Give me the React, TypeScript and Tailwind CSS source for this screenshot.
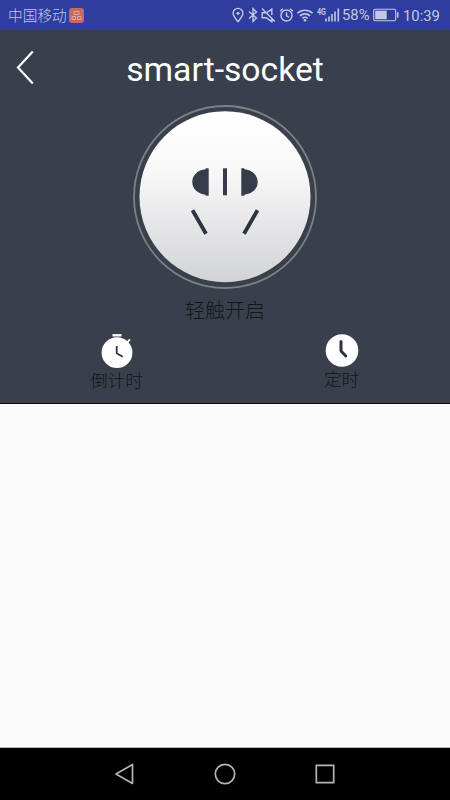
import type { ReactNode } from "react";

const NAV_STROKE = "#b4b4b4";

function StatusIcon({ width, className = "", children }: { width: number; className?: string; children: ReactNode }) {
  return (
    <svg
      width={width}
      height={16}
      viewBox={`0 0 ${width} 16`}
      className={`shrink-0 ${className}`}
      fill="none"
      stroke="currentColor"
      strokeWidth={1.4}
    >
      {children}
    </svg>
  );
}

function StatusBar() {
  return (
    <header className="flex h-[30px] items-center bg-[#2f3e9e] pl-2 pr-[10px] text-[#c3c7e5]">
      <span className="mt-[2px] text-[14.7px] leading-[30px] font-light whitespace-nowrap">中国移动</span>
      <span className="ml-[2px] flex size-[15px] items-center justify-center rounded-[3px] bg-[#c56a5e]">
        <svg width="11" height="11" viewBox="0 0 11 11" fill="none" stroke="#dda9a0" strokeWidth="1">
          <path d="M3 1.5h5v3H3zM1 6.5h3.5v3H1zM6.5 6.5H10v3H6.5z" />
        </svg>
      </span>

      <div className="ml-auto flex items-center">
        <StatusIcon width={12}>
          <path d="M6 14.6C3.4 11.4 1.1 9 1.1 6.3a4.9 4.9 0 0 1 9.8 0C10.9 9 8.6 11.4 6 14.6z" />
          <circle cx="6" cy="6.3" r="1.5" fill="currentColor" stroke="none" />
        </StatusIcon>
        <StatusIcon width={10} className="ml-[4px]">
          <path d="M1 4.5l7.5 6.5L5 14.3V1.7L8.5 5 1 11.5" />
        </StatusIcon>
        <StatusIcon width={15} className="ml-[3px]">
          <path d="M5 5.7H1.2v5H5l5.8 4v-4M6 5.3L10.8 2v6M1 1.5l12.8 13" />
        </StatusIcon>
        <StatusIcon width={15} className="ml-[3px]">
          <circle cx="7.5" cy="8.5" r="5.5" />
          <path d="M7.5 5.3v3.5l2.5 1.4M1 4.3l3-2.6M14 4.3l-3-2.6" />
        </StatusIcon>
        <StatusIcon width={18} className="ml-[2px]">
          <path d="M1.5 6.2a11 11 0 0 1 15 0M4 8.9a7.3 7.3 0 0 1 10 0M6.4 11.4a3.9 3.9 0 0 1 5.2 0" strokeWidth={1.6} />
          <circle cx="9" cy="13.2" r="1.3" fill="currentColor" stroke="none" />
        </StatusIcon>
        <span className="ml-[3px] -mt-[7px] w-[8px] origin-left scale-x-[0.75] text-[9.5px] leading-[8px] font-bold">4G</span>
        <StatusIcon width={15}>
          <path d="M1 11.5v3M4 9.5v5M7 7v7.5M10 4.5v10M13.3 1.5v13" strokeWidth={1.6} />
        </StatusIcon>
        <span className="ml-[2px] w-[28px] text-[14.8px] leading-[30px] whitespace-nowrap">58%</span>
        <StatusIcon width={26} className="ml-[3px]">
          <rect x="0.7" y="2.2" width="22" height="11.5" rx="1.5" strokeWidth={1.1} />
          <path d="M2.2 3.7h11.5v8.5H2.2z" fill="currentColor" stroke="none" />
          <path d="M24.7 5.3v5.4" strokeWidth={1.5} />
        </StatusIcon>
        <span className="ml-[4px] mt-px w-[37px] text-[14.8px] leading-[30px] whitespace-nowrap">10:39</span>
      </div>
    </header>
  );
}

function SocketButton() {
  return (
    <button aria-label="轻触开启" className="block">
      <svg width="184" height="184" viewBox="0 0 184 184">
        <defs>
          <linearGradient id="face" x1="0" y1="0" x2="0" y2="1">
            <stop offset="0" stopColor="#ffffff" />
            <stop offset="0.35" stopColor="#f8f8f9" />
            <stop offset="1" stopColor="#d2d3d5" />
          </linearGradient>
        </defs>
        <circle cx="92" cy="92" r="91" fill="none" stroke="#7d8087" strokeWidth="1.8" />
        <circle cx="92" cy="91.7" r="85.5" fill="url(#face)" />
        <g fill="#363c49">
          <path d="M75.7 63.3h-3v1C64.5 65 59.3 70.5 59.3 77s5.2 12 13.4 12.7v1h3z" />
          <path d="M108.3 63.3h3v1c8.2.7 13.4 6.2 13.4 12.7s-5.2 12-13.4 12.7v1h-3z" />
          <path d="M90 63.3h4v27h-4z" />
        </g>
        <path d="M59.5 105.3L73 128.7M124.5 105.3L111 128.7" stroke="#2c3342" strokeWidth="3.8" />
      </svg>
    </button>
  );
}

function CountdownIcon() {
  return (
    <svg width="34" height="36" viewBox="0 0 34 36">
      <circle cx="17" cy="19.7" r="15.4" fill="#fff" />
      <path d="M12.5 2.3h9" stroke="#fff" strokeWidth="2.4" />
      <path d="M27.5 9.2L30 6.4" stroke="#fff" strokeWidth="1.8" />
      <path d="M16.7 13v7.3l6 3.4" fill="none" stroke="#2c3342" strokeWidth="1.8" />
    </svg>
  );
}

function TimerIcon() {
  return (
    <svg width="34" height="34" viewBox="0 0 34 34">
      <circle cx="17" cy="17.5" r="16.3" fill="#fff" />
      <path d="M16 8.5V18l4.8 5" fill="none" stroke="#2c3342" strokeWidth="3" strokeLinecap="round" strokeLinejoin="round" />
    </svg>
  );
}

export default function App() {
  return (
    <div className="flex h-[800px] w-[450px] flex-col overflow-hidden bg-[#fafafa] font-[Roboto,'Noto_Sans_CJK_SC',sans-serif]">
      <StatusBar />

      <section className="flex h-[374px] shrink-0 flex-col border-b border-[#080b14] bg-[#393f4b]">
        <div className="grid h-[75px] grid-cols-[50px_1fr_50px] items-center">
          <button aria-label="back" className="pl-4">
            <svg width="18" height="34" viewBox="0 0 18 34" fill="none" stroke="#fff" strokeWidth="2.2">
              <path d="M16.8.5L2 16.5l14.8 16" />
            </svg>
          </button>
          <h1 className="pt-[5px] text-center text-[33.7px] leading-10 text-white">smart-socket</h1>
        </div>

        <div className="flex flex-col items-center">
          <SocketButton />
          <p className="mt-[7px] text-[20px] leading-[30px] font-light text-[#14161b]">轻触开启</p>
        </div>

        <div className="mt-[7px] flex items-start">
          <button className="flex w-[233px] flex-col items-center">
            <CountdownIcon />
            <span className="text-[17.5px] leading-[24px] font-light text-[#14161b]">倒计时</span>
          </button>
          <button className="flex w-[217px] flex-col items-center">
            <TimerIcon />
            <span className="mt-px text-[17.5px] leading-[24px] font-light text-[#14161b]">定时</span>
          </button>
        </div>
      </section>

      <main className="flex-1" />

      <nav className="flex h-[53px] shrink-0 items-center justify-center gap-[78px] border-t border-[#b5b5b5] bg-black">
        <button aria-label="Back">
          <svg width="22" height="22" viewBox="0 0 22 22" fill="none" stroke={NAV_STROKE} strokeWidth="1.7" strokeLinejoin="round">
            <path d="M18.5 1.5v19L2 11z" />
          </svg>
        </button>
        <button aria-label="Home">
          <svg width="22" height="22" viewBox="0 0 22 22" fill="none" stroke={NAV_STROKE} strokeWidth="1.7">
            <circle cx="11" cy="11" r="9.7" />
          </svg>
        </button>
        <button aria-label="Recents">
          <svg width="22" height="22" viewBox="0 0 22 22" fill="none" stroke={NAV_STROKE} strokeWidth="1.7" strokeLinejoin="round">
            <path d="M2.3 2.3h17.4v17.4H2.3z" />
          </svg>
        </button>
      </nav>
    </div>
  );
}
